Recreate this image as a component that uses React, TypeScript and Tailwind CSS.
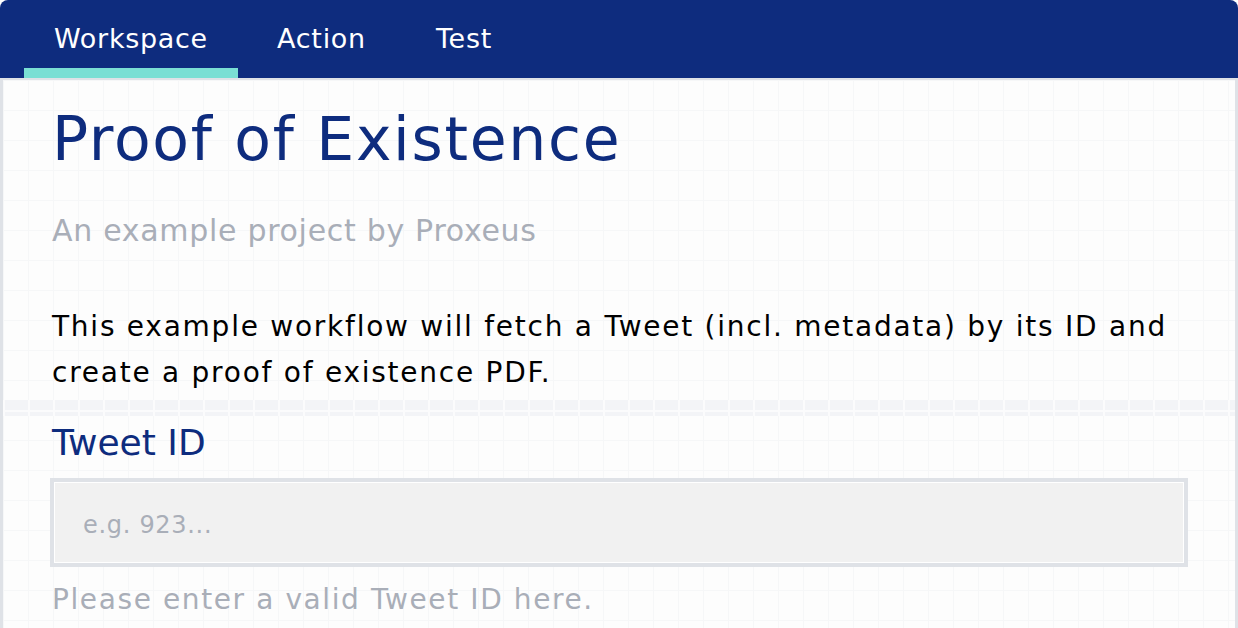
import React from 'react';

const tabs = [
  { label: 'Workspace', w: 'w-[214px]', active: true },
  { label: 'Action', w: 'w-[167px]', active: false },
  { label: 'Test', w: 'w-[118px]', active: false },
];

export default function App() {
  return (
    <div className="w-[1238px] h-[628px] overflow-hidden bg-white font-['DejaVu_Sans',sans-serif]">
      {/* Header */}
      <div className="h-[78px] bg-[#0e2c7e] rounded-t-[8px] flex pl-[24px]">
        {tabs.map((t) => (
          <div
            key={t.label}
            className={
              t.w +
              ' h-full flex justify-center text-white text-[27px] leading-[34px] tracking-[0.7px] pt-[22px] border-b-[10px] ' +
              (t.active ? 'border-[#7adfd4]' : 'border-transparent')
            }
          >
            {t.label}
          </div>
        ))}
      </div>

      {/* Content */}
      <div className="h-[550px] border-t-2 border-x-[3px] border-[#dfe2e7] bg-[#fdfdfd] bg-[linear-gradient(to_right,#f6f7f8_1px,transparent_1px),linear-gradient(to_bottom,#f6f7f8_1px,transparent_1px)] bg-[size:25px_30px]">
        <div className="pl-[49px] pr-[40px]">
          <h1 className="text-[#0e2c7e] text-[60px] leading-[72px] tracking-[1.7px] pt-[23px]">Proof of Existence</h1>
          <p className="text-[#a9aeb8] text-[30px] leading-[36px] tracking-[0.7px] mt-[38px]">An example project by Proxeus</p>
          <p className="text-black text-[28px] leading-[46px] tracking-[1.75px] mt-[55px]">
            This example workflow will fetch a Tweet (incl. metadata) by its ID and create a proof of existence PDF.
          </p>
        </div>

        {/* separator band */}
        <div className="h-[16px] mt-[4px] bg-[#f3f4f7] bg-[linear-gradient(to_right,#fbfbfc_2px,transparent_2px),linear-gradient(to_bottom,transparent_10px,#fbfbfc_10px,#fbfbfc_12px,transparent_12px)] bg-[size:25px_16px]" />

        <div className="pl-[49px] pr-[47px]">
          <label className="block text-[#0e2c7e] text-[36px] leading-[44px] mt-[5px]">Tweet ID</label>
          <div className="-ml-[2px] mt-[13px] h-[89px] border-4 border-[#dfe2e7] bg-[#f1f1f1] shadow-[inset_0_0_0_1px_#ffffff] flex items-center px-[29px] pt-[5px]">
            <span className="text-[#a9aeb8] text-[24px] tracking-[0.7px]">e.g. 923...</span>
          </div>
          <p className="text-[#a9aeb8] text-[28px] leading-[36px] tracking-[1.6px] mt-[15px]">Please enter a valid Tweet ID here.</p>
        </div>
      </div>
    </div>
  );
}
